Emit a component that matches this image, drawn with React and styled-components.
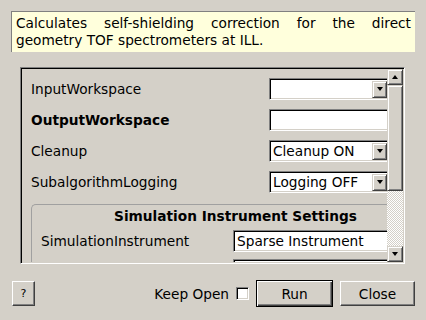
import React from 'react';
import styled, { createGlobalStyle } from 'styled-components';

const GlobalStyle = createGlobalStyle`
  html, body {
    margin: 0;
    padding: 0;
    background: #d4d0c8;
  }
  body {
    font-family: "DejaVu Sans", "Liberation Sans", sans-serif;
    font-size: 13.7px;
    color: #000;
  }
`;

const Dialog = styled.div`
  width: 426px;
  height: 320px;
  box-sizing: border-box;
  padding: 11px 11px 0 11px;
  display: flex;
  flex-direction: column;
  overflow: hidden;
`;

const Description = styled.div`
  height: 41px;
  box-sizing: border-box;
  padding: 3px 4px 0 4px;
  background: #ffffdc;
  border-top: 1px solid #808080;
  border-left: 1px solid #808080;
  line-height: 16.5px;
  text-align: justify;
`;

const ScrollFrame = styled.div`
  margin: 15px 10px 0 9px;
  height: 197px;
  box-sizing: border-box;
  display: flex;
  border: 1px solid;
  border-color: #808080 #fff #fff #808080;
  box-shadow: inset 1px 1px 0 #000, inset -1px -1px 0 #d4d0c8;
  padding: 1px;
`;

const Viewport = styled.div`
  flex: 1;
  overflow: hidden;
  padding: 9px 0 0 9px;
`;

const PropGrid = styled.div`
  width: 359px;
  display: grid;
  grid-template-columns: 238px 1fr;
  row-gap: 9px;
  align-items: center;
`;

const Label = styled.div`
  font-weight: ${p => (p.$bold ? 'bold' : 'normal')};
  white-space: nowrap;
`;

const Sunken = styled.div`
  height: 22px;
  box-sizing: border-box;
  background: #fff;
  border: 1px solid;
  border-color: #808080 #fff #fff #808080;
  box-shadow: inset 1px 1px 0 #000, inset -1px -1px 0 #d4d0c8;
  display: flex;
  align-items: center;
  padding-left: 3px;
  white-space: nowrap;
  overflow: hidden;
`;

const ComboBox = styled(Sunken)`
  padding: 2px 2px 2px 3px;
  justify-content: space-between;
`;

const ArrowButton = styled.div`
  width: 15px;
  height: 17px;
  flex: none;
  box-sizing: border-box;
  background: #d4d0c8;
  border: 1px solid;
  border-color: #d4d0c8 #404040 #404040 #d4d0c8;
  box-shadow: inset 1px 1px 0 #fff, inset -1px -1px 0 #808080;
  display: flex;
  align-items: center;
  justify-content: center;
`;

const Triangle = styled.div`
  width: 0;
  height: 0;
  border-left: 3.5px solid transparent;
  border-right: 3.5px solid transparent;
  ${p => (p.$up ? 'border-bottom: 4px solid #000;' : 'border-top: 4px solid #000;')}
`;

const GroupBox = styled.div`
  margin-top: 11px;
  width: 408px;
  box-sizing: border-box;
  border: 1px solid #a0a0a0;
  border-right: none;
  border-bottom: none;
  border-radius: 5px 0 0 0;
  padding: 3px 0 0 9px;
`;

const GroupTitle = styled.div`
  font-weight: bold;
  text-align: center;
  margin-left: -9px;
  line-height: 16px;
`;

const GroupGrid = styled.div`
  display: grid;
  grid-template-columns: 192px 1fr;
  row-gap: 7px;
  margin-top: 6px;
  align-items: center;
`;

const ScrollBar = styled.div`
  width: 16px;
  display: flex;
  flex-direction: column;
`;

const ScrollButton = styled(ArrowButton)`
  width: 16px;
  height: 16px;
`;

const Slider = styled.div`
  height: 106px;
  box-sizing: border-box;
  background: #d4d0c8;
  border: 1px solid;
  border-color: #d4d0c8 #404040 #404040 #d4d0c8;
  box-shadow: inset 1px 1px 0 #fff, inset -1px -1px 0 #808080;
`;

const Trough = styled.div`
  flex: 1;
  background: repeating-conic-gradient(#fff 0 25%, #d4d0c8 0 50%) 0 0 / 2px 2px;
`;

const ButtonRow = styled.div`
  display: flex;
  align-items: center;
  margin-top: 16px;
  margin-left: 1px;
`;

const Button = styled.div`
  width: ${p => p.$w}px;
  height: ${p => (p.$default ? 27 : 25)}px;
  box-sizing: border-box;
  display: flex;
  align-items: center;
  justify-content: center;
  background: #d4d0c8;
  border: 1px solid;
  border-color: ${p => (p.$default ? '#000' : '#fff #404040 #404040 #fff')};
  box-shadow: ${p =>
    p.$default
      ? 'inset 1px 1px 0 #fff, inset -1px -1px 0 #404040, inset -2px -2px 0 #808080'
      : 'inset -1px -1px 0 #808080'};
  font-size: ${p => (p.$small ? 11 : 13.7)}px;
  margin-left: ${p => p.$ml || 0}px;
`;

const KeepOpen = styled.div`
  margin-left: auto;
  display: flex;
  align-items: center;
  gap: 7px;
`;

const CheckBox = styled.div`
  width: 13px;
  height: 13px;
  box-sizing: border-box;
  background: #fff;
  border: 1px solid;
  border-color: #808080 #fff #fff #808080;
  box-shadow: inset 1px 1px 0 #000, inset -1px -1px 0 #d4d0c8;
`;

function Combo({ value }) {
  return (
    <ComboBox>
      <span>{value}</span>
      <ArrowButton>
        <Triangle />
      </ArrowButton>
    </ComboBox>
  );
}

export default function App() {
  return (
    <Dialog>
      <GlobalStyle />
      <Description>
        Calculates self-shielding correction for the direct geometry TOF spectrometers at ILL.
      </Description>
      <ScrollFrame>
        <Viewport>
          <PropGrid>
            <Label>InputWorkspace</Label>
            <Combo value="" />
            <Label $bold>OutputWorkspace</Label>
            <Sunken />
            <Label>Cleanup</Label>
            <Combo value="Cleanup ON" />
            <Label>SubalgorithmLogging</Label>
            <Combo value="Logging OFF" />
          </PropGrid>
          <GroupBox>
            <GroupTitle>Simulation Instrument Settings</GroupTitle>
            <GroupGrid>
              <Label>SimulationInstrument</Label>
              <Sunken>Sparse Instrument</Sunken>
              <Label />
              <Sunken />
            </GroupGrid>
          </GroupBox>
        </Viewport>
        <ScrollBar>
          <ScrollButton>
            <Triangle $up />
          </ScrollButton>
          <Slider />
          <Trough />
          <ScrollButton>
            <Triangle />
          </ScrollButton>
        </ScrollBar>
      </ScrollFrame>
      <ButtonRow>
        <Button $w={23} $small>?</Button>
        <KeepOpen>
          Keep Open
          <CheckBox />
        </KeepOpen>
        <Button $w={77} $default $ml={7}>Run</Button>
        <Button $w={75} $ml={7}>Close</Button>
      </ButtonRow>
    </Dialog>
  );
}
